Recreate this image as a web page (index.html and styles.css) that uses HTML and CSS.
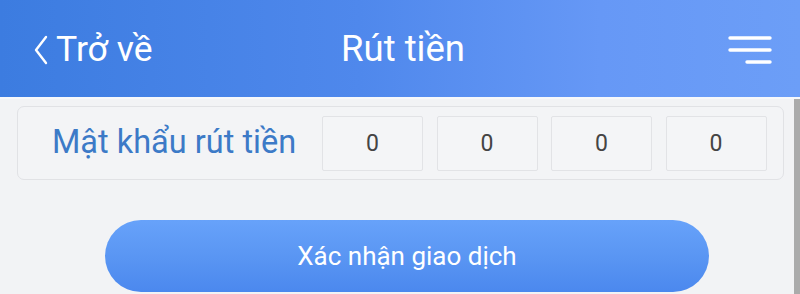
FILE: index.html
```html
<!DOCTYPE html>
<html lang="vi">
<head>
<meta charset="utf-8">
<title>Rút tiền</title>
<link rel="stylesheet" href="styles.css">
</head>
<body>
<div class="page">
  <header class="topbar">
    <div class="back">
      <svg class="chev" width="14" height="30" viewBox="0 0 14 30"><path d="M12 2 L2 15 L12 28" fill="none" stroke="#fff" stroke-width="2.4" stroke-linecap="round" stroke-linejoin="round"/></svg>
      <span class="back-text">Trở về</span>
    </div>
    <div class="title">Rút tiền</div>
    <div class="menu">
      <svg width="44" height="30" viewBox="0 0 44 30"><g stroke="#fff" stroke-width="3.4" stroke-linecap="round"><line x1="2" y1="3" x2="42" y2="3"/><line x1="2" y1="15" x2="42" y2="15"/><line x1="19" y1="27" x2="42" y2="27"/></g></svg>
    </div>
  </header>
  <div class="main">
    <div class="content">
      <div class="card">
        <div class="label">Mật khẩu rút tiền</div>
        <div class="pins">
          <div class="pin">0</div>
          <div class="pin">0</div>
          <div class="pin">0</div>
          <div class="pin">0</div>
        </div>
      </div>
      <div class="btn">Xác nhận giao dịch</div>
    </div>
    <div class="scrollbar"></div>
  </div>
</div>
</body>
</html>
```

FILE: styles.css
```css
html, body {
  margin: 0;
  padding: 0;
}
body {
  width: 800px;
  height: 294px;
  overflow: hidden;
  background: #f2f3f5;
  font-family: Roboto, "Noto Sans", sans-serif;
}
.page {
  display: flex;
  flex-direction: column;
  height: 294px;
}
.topbar {
  height: 97px;
  flex: none;
  display: grid;
  grid-template-columns: 1fr auto 1fr;
  align-items: center;
  padding: 0 28px 0 34px;
  background: linear-gradient(90deg, #3c7ce0 0%, #4f88ec 45%, #6698f6 75%, #6c9ef7 100%);
  border-bottom: 2px solid #f6f8fb;
  color: #fff;
}
.back {
  display: flex;
  align-items: center;
  gap: 8px;
}
.chev {
  display: block;
  margin-top: 2px;
}
.back-text {
  font-size: 35.5px;
  line-height: 40px;
}
.title {
  font-size: 36.5px;
  line-height: 40px;
  text-align: center;
}
.menu {
  display: flex;
  justify-content: flex-end;
}
.menu svg {
  display: block;
  margin-top: 2px;
}
.main {
  flex: 1;
  display: flex;
}
.content {
  flex: 1;
  padding-top: 7px;
}
.scrollbar {
  width: 7px;
  background: #ababab;
}
.card {
  margin: 0 10px 0 17px;
  height: 72px;
  border: 1px solid #e1e2e5;
  border-radius: 7px;
  background: #f3f4f6;
  display: flex;
  align-items: center;
  padding: 0 16px 0 34px;
}
.label {
  width: 270px;
  font-size: 32.5px;
  color: #3c7ac7;
  padding-bottom: 2px;
}
.pins {
  display: flex;
  gap: 13.5px;
}
.pin {
  box-sizing: border-box;
  width: 101px;
  height: 55px;
  border: 1px solid #e2e3e6;
  border-radius: 2px;
  background: #f4f5f7;
  display: flex;
  align-items: center;
  justify-content: center;
  font-size: 23px;
  color: #444;
}
.btn {
  margin: 40px 0 0 105px;
  width: 604px;
  height: 72px;
  border-radius: 36px;
  background: linear-gradient(180deg, #67a2fa 0%, #5a96f3 50%, #4b88ee 100%);
  color: #fff;
  font-size: 26px;
  display: flex;
  align-items: center;
  justify-content: center;
}
```
